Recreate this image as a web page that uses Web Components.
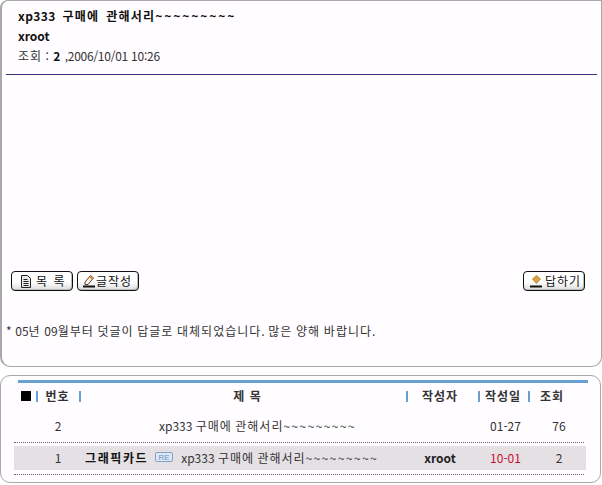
<!DOCTYPE html>
<html lang="ko">
<head>
<meta charset="utf-8">
<title>xp333</title>
<style>
    html, body { margin: 0; background: #fff; }
    body {
        width: 602px;
        height: 485px;
        overflow: hidden;
        font: 12px "Noto Sans CJK KR", "Liberation Sans", sans-serif;
        color: #222;
    }
</style>
</head>
<body>
<board-article>
    <wide-text slot="title">xp333 구매에 관해서리~~~~~~~~~</wide-text>
    <span slot="author">xroot</span>
    <span slot="views">2</span>
    <span slot="date">,2006/10/01 10:26</span>
    <board-button slot="left" icon="doc">목 록</board-button>
    <board-button slot="left" icon="pen">글작성</board-button>
    <board-button slot="right" icon="reply">답하기</board-button>
    <wide-text slot="note">* 05년 09월부터 덧글이 답글로 대체되었습니다. 많은 양해 바랍니다.</wide-text>
</board-article>
<board-list>
    <board-row num="2" date="01-27" views="76" indent="80"><wide-text>xp333 구매에 관해서리~~~~~~~~~</wide-text></board-row>
    <board-row num="1" date="10-01" views="2" author="xroot" indent="6" current>
        <wide-text slot="category">그래픽카드</wide-text>
        <wide-text>xp333 구매에 관해서리~~~~~~~~~</wide-text>
    </board-row>
</board-list>

<script>
const ICONS = {
    doc: `<svg width="12" height="13" viewBox="0 0 12 13"><path d="M1.500.5h6l3 3v9h-9z" fill="#e8e8e8" stroke="#222"/><path d="M3.500 4.500h4M3.500 6.500h5M3.500 8.500h5M3.500 10.500h5" stroke="#222"/></svg>`,
    pen: `<svg width="14" height="14" viewBox="0 0 14 14"><path d="M3 8 8.500 1.500l3 2.500L6 10.500H3z" fill="#f6f2ea" stroke="#5a3a2a"/><path d="M8.500 1.500l3 2.500-1.500 1.800-3-2.500z" fill="#dc8f3c"/><path d="M1 12.500h12" stroke="#111" stroke-width="2"/></svg>`,
    reply: `<svg width="14" height="14" viewBox="0 0 14 14"><path d="M7.500 1.500l4 3.500-4 4.500-4-4.500z" fill="#e2a13c" stroke="#8a6420" stroke-width=".6"/><path d="M1 12.500h12" stroke="#111" stroke-width="2"/></svg>`
};
const BUTTON_PADDING = {doc: 8, pen: 4, reply: 5};
const BUTTON_GAP = {doc: 4, pen: 0, reply: 2};

// hangul and tilde runs need extra tracking to get the old gulim widths
class WideText extends HTMLElement {
    constructor() {
        super();
        const html = this.textContent.trim()
            .replace(/[\uac00-\ud7a3]+/g, '<span class="k">$&</span>')
            .replace(/~+/g, '<span class="t">$&</span>');
        this.attachShadow({mode: 'open'}).innerHTML = `
            <style>
                :host { display: inline; }
                .k { letter-spacing: var(--k-space, 1px); }
                .t { letter-spacing: var(--t-space, 1.4px); }
            </style>${html}`;
    }
}

class BoardButton extends HTMLElement {
    constructor() {
        super();
        const icon = this.getAttribute('icon');
        const label = this.textContent.trim();
        this.attachShadow({mode: 'open'}).innerHTML = `
            <style>
                :host {
                    display: flex;
                    align-items: center;
                    gap: ${BUTTON_GAP[icon]}px;
                    box-sizing: border-box;
                    width: 62px;
                    height: 20px;
                    padding-left: ${BUTTON_PADDING[icon]}px;
                    border: 1px solid #111;
                    border-radius: 4px;
                    background: linear-gradient(#fff 55%, #dcdcdc);
                    box-shadow: inset -1px -1px 0 #bbb;
                    color: #111;
                    line-height: 16px;
                    word-spacing: 2px;
                    cursor: pointer;
                }
                svg { display: block; flex: none; }
            </style>${ICONS[icon]}<wide-text>${label}</wide-text>`;
    }
}

class BoardArticle extends HTMLElement {
    constructor() {
        super();
        this.attachShadow({mode: 'open'}).innerHTML = `
            <style>
                :host {
                    display: block;
                    box-sizing: border-box;
                    height: 367px;
                    border: 1px solid #a8a8a8;
                    border-left-width: 2px;
                    border-radius: 8px 0 10px 10px;
                    background: #fffdff;
                }
                #head {
                    margin: 0 4px;
                    height: 73px;
                    padding-left: 12px;
                    border-bottom: 1px solid #3a2d7d;
                }
                #head div { height: 20px; line-height: 20px; }
                #title {
                    padding-top: 5px;
                    font-weight: bold;
                    color: #111;
                    letter-spacing: .4px;
                    word-spacing: 3px;
                    --k-space: 1.25px;
                    --t-space: 1.9px;
                }
                #author { font-weight: bold; color: #111; }
                #meta { color: #333; }
                #meta b { color: #111; margin: 0 1px 0 1px; }
                #date { letter-spacing: -.25px; }
                #buttons {
                    display: flex;
                    justify-content: space-between;
                    margin: 196px 16px 0 9px;
                }
                #buttons div { display: flex; gap: 4px; }
                #note { margin: 30px 0 0 4px; line-height: 20px; color: #333; word-spacing: .3px; }
            </style>
            <div id="head">
                <div id="title"><slot name="title"></slot></div>
                <div id="author"><slot name="author"></slot></div>
                <div id="meta"><wide-text>조회</wide-text> : <b><slot name="views"></slot></b> <span id="date"><slot name="date"></slot></span></div>
            </div>
            <div id="buttons">
                <div><slot name="left"></slot></div>
                <div><slot name="right"></slot></div>
            </div>
            <div id="note"><slot name="note"></slot></div>
        `;
    }
}

class BoardList extends HTMLElement {
    constructor() {
        super();
        this.attachShadow({mode: 'open'}).innerHTML = `
            <style>
                :host {
                    display: block;
                    box-sizing: border-box;
                    height: 108px;
                    margin: 8px 1px 0 0;
                    padding: 4px 14px 0 13px;
                    border: 1px solid #a8a8a8;
                    border-radius: 10px;
                    background: #fffdff;
                }
                #rule { height: 3px; margin: 0 -2px 0 4px; background: #6a9fd4; }
                #head {
                    display: grid;
                    grid-template-columns: 22px 43px 327px 72px 50px 56px;
                    height: 26px;
                    line-height: 26px;
                    font-weight: bold;
                    color: #333;
                    text-align: center;
                    letter-spacing: 1px;
                }
                #head div {
                    background: linear-gradient(#6a9fd4, #6a9fd4) left center / 2px 11px no-repeat;
                }
                #head div:first-child {
                    background: none;
                    display: flex;
                    align-items: center;
                    padding-left: 7px;
                }
                #head i { display: block; width: 10px; height: 10px; background: #000; }
                #rows { margin-top: 5px; }
            </style>
            <div id="rule"></div>
            <div id="head">
                <div><i></i></div>
                <div>번호</div>
                <div style="padding-left:10px">제 목</div>
                <div style="padding-right:4px">작성자</div>
                <div>작성일</div>
                <div style="padding-right:8px">조회</div>
            </div>
            <div id="rows"><slot></slot></div>
        `;
    }
}

class BoardRow extends HTMLElement {
    constructor() {
        super();
        const a = name => this.getAttribute(name) || '';
        const current = this.hasAttribute('current');
        this.attachShadow({mode: 'open'}).innerHTML = `
            <style>
                :host { display: block; margin-bottom: 3px; }
                #row {
                    display: grid;
                    grid-template-columns: 65px 327px 72px 50px 56px;
                    align-items: center;
                    box-sizing: border-box;
                    height: 24px;
                    padding-bottom: 2px;
                    background: ${current ? '#e4e0e4' : 'transparent'};
                    text-align: center;
                    color: #333;
                }
                #line { margin: 4px 2px 0 0; border-top: 1px dotted #666; }
                #num { padding-left: 23px; }
                #title {
                    display: flex;
                    align-items: center;
                    padding-left: ${a('indent')}px;
                    text-align: left;
                    white-space: nowrap;
                }
                #author { font-weight: bold; padding-right: 4px; color: #222; }
                #date { padding-left: 5px; color: ${current ? '#c8102e' : '#333'}; }
                #views { padding-left: 6px; }
                ::slotted([slot="category"]) { font-weight: bold; color: #111; --k-space: 1.6px; }
                svg { display: ${current ? 'block' : 'none'}; margin: 0 8px 0 7px; }
            </style>
            <div id="row">
                <div id="num">${a('num')}</div>
                <div id="title"><slot name="category"></slot><svg width="18" height="10" viewBox="0 0 18 10"><rect x=".5" y=".5" width="17" height="9" rx="1.500" fill="#dce8f4" stroke="#7fa4cc"/><text x="9" y="8" font-size="8" font-family="Liberation Sans" text-anchor="middle" fill="#6f94c0">RE</text></svg><span><slot></slot></span></div>
                <div id="author">${a('author')}</div>
                <div id="date">${a('date')}</div>
                <div id="views">${a('views')}</div>
            </div>
            <div id="line"></div>
        `;
    }
}

customElements.define('wide-text', WideText);
customElements.define('board-button', BoardButton);
customElements.define('board-article', BoardArticle);
customElements.define('board-list', BoardList);
customElements.define('board-row', BoardRow);
</script>
</body>
</html>
